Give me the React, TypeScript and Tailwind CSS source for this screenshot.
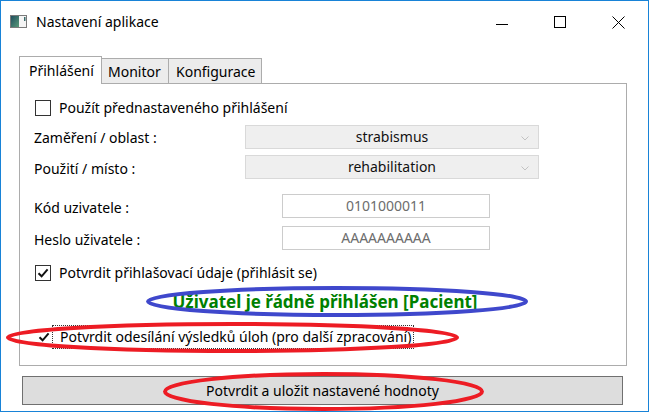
import React from 'react';

const font = { fontFamily: '"Noto Sans", "Open Sans", sans-serif' };

function CheckBox({ checked, bordered = true }: { checked: boolean; bordered?: boolean }) {
  return (
    <div
      className={
        'w-[16px] h-[16px] shrink-0 bg-white flex items-center justify-center ' +
        (bordered ? 'border border-[#333333]' : '')
      }
    >
      {checked && (
        <svg width="12" height="12" viewBox="0 0 12 12">
          <path d="M1.5 6.2 L4.6 9.3 L10.6 2.4" fill="none" stroke="#111" strokeWidth="2" />
        </svg>
      )}
    </div>
  );
}

function Combo({ value }: { value: string }) {
  return (
    <div className="relative w-[294px] h-[24px] bg-[#efefef] border border-[#d9d9d9] flex items-center justify-center text-[14px] text-[#111]">
      <span className="-mt-px">{value}</span>
      <svg className="absolute right-[9px] top-[10px]" width="8" height="5" viewBox="0 0 8 5">
        <path d="M0.5 0.5 L4 4 L7.5 0.5" fill="none" stroke="#c2c2c2" strokeWidth="1" />
      </svg>
    </div>
  );
}

function TextBox({ value }: { value: string }) {
  return (
    <div className="w-[208px] h-[24px] bg-white border border-[#cccccc] flex items-center justify-center text-[14px] text-[#6d6d6d]">
      <span className="-mt-px">{value}</span>
    </div>
  );
}

function AppIcon() {
  return (
    <svg width="17" height="13" viewBox="0 0 17 13">
      <defs>
        <linearGradient id="ig" x1="0" y1="0" x2="1" y2="1">
          <stop offset="0" stopColor="#1f4f5f" />
          <stop offset="1" stopColor="#5a9a78" />
        </linearGradient>
      </defs>
      <rect x="0.5" y="0.5" width="16" height="12" fill="#f4f4f4" stroke="#7a7a7a" />
      <rect x="1" y="1" width="8" height="11" fill="url(#ig)" />
      <rect x="14" y="2" width="1.5" height="4" fill="#3b6b6b" />
    </svg>
  );
}

function Annotations() {
  return (
    <svg className="absolute inset-0 pointer-events-none" width="649" height="412" viewBox="0 0 649 412">
      <ellipse cx="336" cy="300.5" rx="189" ry="13.5" fill="none" stroke="#3f48cc" strokeWidth="4" />
      <ellipse cx="231.5" cy="336.5" rx="224.5" ry="13.5" fill="none" stroke="#ed1c24" strokeWidth="4" />
      <ellipse cx="322.5" cy="390.5" rx="158.5" ry="17.5" fill="none" stroke="#ed1c24" strokeWidth="4" />
    </svg>
  );
}

export default function App() {
  return (
    <div className="relative w-[649px] h-[412px] bg-white border border-[#1883d7] flex flex-col text-black overflow-hidden" style={font}>
      {/* title bar */}
      <div className="h-[36px] pt-[6px] flex items-center shrink-0">
        <div className="ml-[9px] mt-[-1px]">
          <AppIcon />
        </div>
        <span className="ml-[9px] text-[14px] leading-none">Nastavení aplikace</span>
        <div className="ml-auto flex items-center h-full">
          <div className="w-[58px] h-full flex items-center justify-center">
            <div className="w-[12px] h-px bg-black mt-[4px]" />
          </div>
          <div className="w-[58px] h-full flex items-center justify-center">
            <div className="w-[12px] h-[12px] border border-black" />
          </div>
          <div className="w-[58px] h-full flex items-center justify-center mr-[1px]">
            <svg width="13" height="13" viewBox="0 0 13 13">
              <path d="M0.5 0.5 L12.5 12.5 M12.5 0.5 L0.5 12.5" stroke="#000" strokeWidth="1" />
            </svg>
          </div>
        </div>
      </div>

      {/* tabs */}
      <div className="ml-[18px] mt-[19px] w-[608px] flex flex-col">
        <div className="flex items-end h-[27px] text-[14px]">
          <div className="relative z-10 h-[28px] w-[83px] -mb-px bg-white border border-b-0 border-[#acacac] pl-[9px] pt-[3px]">
            Přihlášení
          </div>
          <div className="h-[25px] w-[68px] -ml-px bg-[#ececec] border border-b-0 border-[#acacac] pl-[6px] pt-[2px]">
            Monitor
          </div>
          <div className="h-[25px] w-[94px] -ml-px bg-[#ececec] border border-b-0 border-[#acacac] pl-[7px] pt-[2px]">
            Konfigurace
          </div>
        </div>
        <div className="h-[283px] border border-[#acacac] bg-white flex flex-col text-[14px]">
          <div className="mt-[16px] ml-[15px] h-[16px] flex items-center gap-[8px]">
            <CheckBox checked={false} />
            <span className="-mt-px">Použít přednastaveného přihlášení</span>
          </div>
          <div className="mt-[9px] ml-[14px] flex items-center">
            <span className="w-[211px] mt-[1px]">Zaměření / oblast :</span>
            <Combo value="strabismus" />
          </div>
          <div className="mt-[6px] ml-[14px] flex items-center">
            <span className="w-[211px] mt-[3px]">Použití / místo :</span>
            <Combo value="rehabilitation" />
          </div>
          <div className="mt-[14px] ml-[14px] flex items-center">
            <span className="w-[248px] mt-[4px]">Kód uzivatele :</span>
            <TextBox value="0101000011" />
          </div>
          <div className="mt-[7px] ml-[14px] flex items-center">
            <span className="w-[248px] mt-[4px]">Heslo uživatele :</span>
            <TextBox value="AAAAAAAAAA" />
          </div>
          <div className="mt-[15px] ml-[15px] h-[16px] flex items-center gap-[8px]">
            <CheckBox checked />
            <span className="-mt-px">Potvrdit přihlašovací údaje (přihlásit se)</span>
          </div>
          <div className="mt-[11px] h-[20px] flex items-center justify-center">
            <span className="text-[17px] font-bold text-[#008000] ml-[4px]">Uživatel je řádně přihlášen [Pacient]</span>
          </div>
          <div className="mt-[13px] ml-[16px] h-[24px] flex items-center">
            <CheckBox checked bordered={false} />
            <div className="h-[24px] border border-dotted border-[#333] flex items-center pl-[7px] pr-[2px]">
              <span className="-mt-px">Potvrdit odesílání výsledků úloh (pro další zpracování)</span>
            </div>
          </div>
        </div>
      </div>

      {/* button */}
      <div className="ml-[21px] mt-[10px] w-[601px] h-[29px] bg-[#dddddd] border border-[#707070] flex items-center justify-center text-[14px]">
        <span className="-mt-px">Potvrdit a uložit nastavené hodnoty</span>
      </div>

      <Annotations />
    </div>
  );
}
